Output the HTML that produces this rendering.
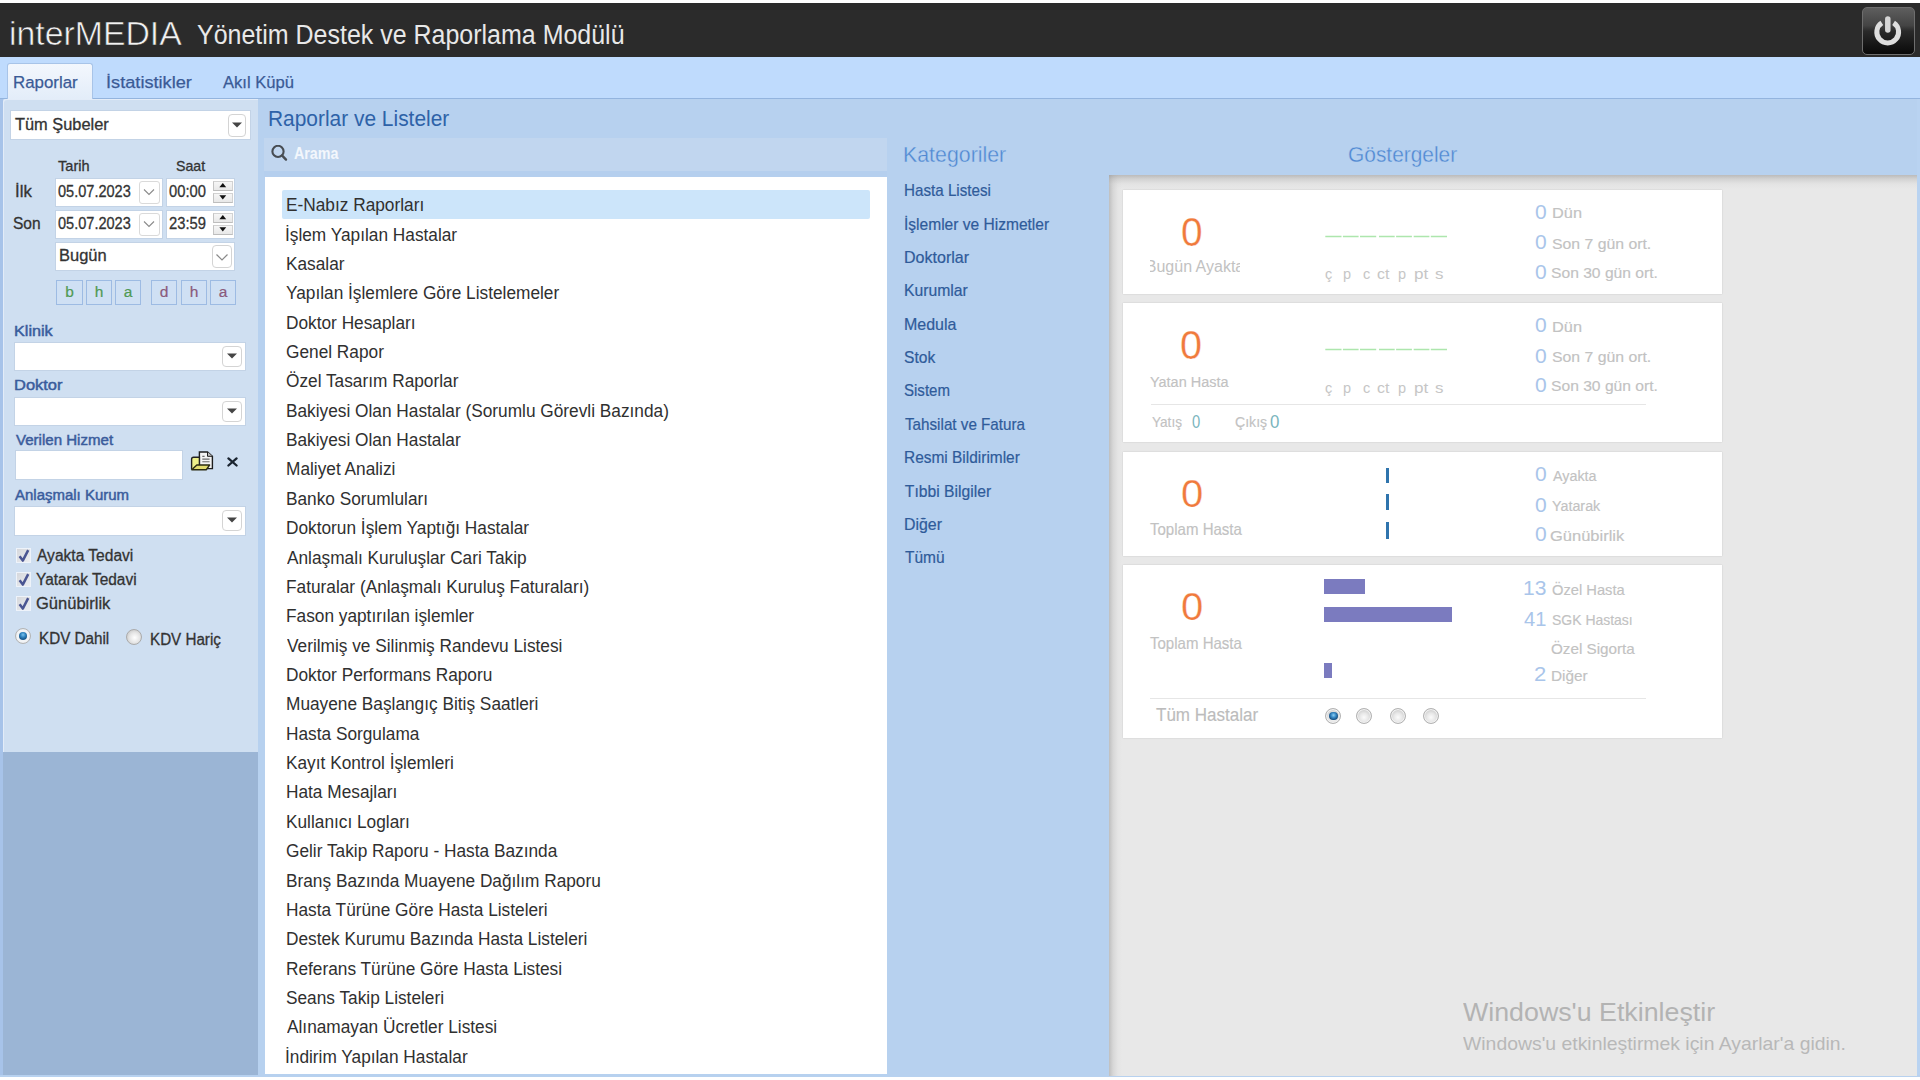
<!DOCTYPE html>
<html><head><meta charset="utf-8"><style>
html,body{margin:0;padding:0;width:1920px;height:1080px;overflow:hidden;background:#fff;position:relative}
body{font-family:"Liberation Sans",sans-serif}
.b{position:absolute}
.t{position:absolute;white-space:pre;font-family:"Liberation Sans",sans-serif}
</style></head><body>
<div class="b" style="left:0px;top:3px;width:1920px;height:54px;background:#2b2b2b"></div>
<div class="b" style="left:1862px;top:7px;width:53px;height:48px;border-radius:5px;border:1px solid #6e6e6e;box-sizing:border-box;background:linear-gradient(#5e5e5e 0%,#444 38%,#2a2a2a 50%,#161616 80%,#0a0a0a 100%)"></div>
<svg class="b" style="left:1862px;top:7px" width="53" height="48" viewBox="0 0 53 48"><path d="M31.6 15.9 A10.9 10.9 0 1 1 19.8 15.9" fill="none" stroke="#dedede" stroke-width="5" stroke-linecap="butt"/><path d="M25.8 12 V23" stroke="#d6d6d6" stroke-width="5.5" stroke-linecap="round"/></svg>
<div class="b" style="left:0px;top:57px;width:1920px;height:41px;background:#bfdbfd"></div>
<div class="b" style="left:0px;top:98px;width:1920px;height:1px;background:#93b4de"></div>
<div class="b" style="left:7px;top:63px;width:86px;height:36px;background:linear-gradient(#f3f7fd,#e3edf9);border:1px solid #a8c4e8;border-bottom:none;border-radius:3px 3px 0 0;box-sizing:border-box"></div>
<div class="b" style="left:0px;top:99px;width:1920px;height:978px;background:#b7d1ef"></div>
<div class="b" style="left:0px;top:1077px;width:1920px;height:3px;background:#ffffff"></div>
<div class="b" style="left:0px;top:99px;width:3px;height:976px;background:#a7c3e9"></div>
<div class="b" style="left:3px;top:99px;width:255px;height:653px;background:#cfdff1;border-top-left-radius:3px;box-shadow:inset 1px 1px 0 #e3ecf8"></div>
<div class="b" style="left:3px;top:752px;width:255px;height:323px;background:#9bb5d5"></div>
<div class="b" style="left:10px;top:110px;width:241px;height:30px;background:#fff;border:1px solid #c3d3e6;box-sizing:border-box"></div>
<div class="b" style="left:228px;top:114px;width:18px;height:23px;background:#fff;border:1px solid #d4d4d4;border-radius:4px;box-sizing:border-box"></div>
<svg class="b" style="left:231.0px;top:120.7px" width="12" height="8"><path d="M1 1.5 L11 1.5 L6 6.5 Z" fill="#454545"/></svg>
<div class="b" style="left:55px;top:178px;width:108px;height:29px;background:#fff;border:1px solid #c3d3e6;box-sizing:border-box"></div>
<div class="b" style="left:139px;top:181px;width:21px;height:23px;background:#fff;border:1px solid #dadada;border-radius:3px;box-sizing:border-box"></div>
<svg class="b" style="left:142px;top:187px" width="14" height="10"><path d="M2 2.5 L7 7.5 L12 2.5" fill="none" stroke="#8a8a8a" stroke-width="1.1"/></svg>
<div class="b" style="left:166px;top:178px;width:69px;height:29px;background:#fff;border:1px solid #c3d3e6;box-sizing:border-box"></div>
<div class="b" style="left:213px;top:181px;width:20px;height:10px;background:linear-gradient(#f6f6f6,#e8e8e8);border:1px solid #d2d2d2;border-left-color:#c4c4c4;border-bottom-color:#bdbdbd;box-sizing:border-box"></div>
<div class="b" style="left:213px;top:193px;width:20px;height:10px;background:linear-gradient(#f6f6f6,#e8e8e8);border:1px solid #d2d2d2;border-left-color:#c4c4c4;border-bottom-color:#bdbdbd;box-sizing:border-box"></div>
<svg class="b" style="left:217px;top:183px" width="12" height="20"><path d="M2.4 4.3 L9.2 4.3 L5.8 0.1 Z" fill="#111"/><path d="M2.4 12.2 L9.2 12.2 L5.8 16.4 Z" fill="#111"/></svg>
<div class="b" style="left:55px;top:210px;width:108px;height:29px;background:#fff;border:1px solid #c3d3e6;box-sizing:border-box"></div>
<div class="b" style="left:139px;top:213px;width:21px;height:23px;background:#fff;border:1px solid #dadada;border-radius:3px;box-sizing:border-box"></div>
<svg class="b" style="left:142px;top:219px" width="14" height="10"><path d="M2 2.5 L7 7.5 L12 2.5" fill="none" stroke="#8a8a8a" stroke-width="1.1"/></svg>
<div class="b" style="left:166px;top:210px;width:69px;height:29px;background:#fff;border:1px solid #c3d3e6;box-sizing:border-box"></div>
<div class="b" style="left:213px;top:213px;width:20px;height:10px;background:linear-gradient(#f6f6f6,#e8e8e8);border:1px solid #d2d2d2;border-left-color:#c4c4c4;border-bottom-color:#bdbdbd;box-sizing:border-box"></div>
<div class="b" style="left:213px;top:225px;width:20px;height:10px;background:linear-gradient(#f6f6f6,#e8e8e8);border:1px solid #d2d2d2;border-left-color:#c4c4c4;border-bottom-color:#bdbdbd;box-sizing:border-box"></div>
<svg class="b" style="left:217px;top:215px" width="12" height="20"><path d="M2.4 4.3 L9.2 4.3 L5.8 0.1 Z" fill="#111"/><path d="M2.4 12.2 L9.2 12.2 L5.8 16.4 Z" fill="#111"/></svg>
<div class="b" style="left:55px;top:242px;width:180px;height:29px;background:#fff;border:1px solid #c3d3e6;box-sizing:border-box"></div>
<div class="b" style="left:212px;top:245px;width:20px;height:23px;background:#fff;border:1px solid #d4d4d4;border-radius:4px;box-sizing:border-box"></div>
<svg class="b" style="left:215.0px;top:251.5px" width="14" height="10"><path d="M1.5 2.5 L7 8 L12.5 2.5" fill="none" stroke="#8a8a8a" stroke-width="1.2"/></svg>
<div class="b" style="left:56px;top:280px;width:27px;height:25px;background:#cfe0f4;border:1px solid #9dbbe3;box-sizing:border-box"></div>
<div class="t" style="left:56px;top:283.88px;width:27px;text-align:center;font-size:15.5px;line-height:15.5px;color:#4f9a55;-webkit-text-stroke:0.2px #4f9a55">b</div>
<div class="b" style="left:86px;top:280px;width:26px;height:25px;background:#cfe0f4;border:1px solid #9dbbe3;box-sizing:border-box"></div>
<div class="t" style="left:86px;top:283.88px;width:26px;text-align:center;font-size:15.5px;line-height:15.5px;color:#4f9a55;-webkit-text-stroke:0.2px #4f9a55">h</div>
<div class="b" style="left:115px;top:280px;width:26px;height:25px;background:#cfe0f4;border:1px solid #9dbbe3;box-sizing:border-box"></div>
<div class="t" style="left:115px;top:283.88px;width:26px;text-align:center;font-size:15.5px;line-height:15.5px;color:#4f9a55;-webkit-text-stroke:0.2px #4f9a55">a</div>
<div class="b" style="left:151px;top:280px;width:26px;height:25px;background:#cfe0f4;border:1px solid #9dbbe3;box-sizing:border-box"></div>
<div class="t" style="left:151px;top:283.88px;width:26px;text-align:center;font-size:15.5px;line-height:15.5px;color:#8a5a7c;-webkit-text-stroke:0.2px #8a5a7c">d</div>
<div class="b" style="left:181px;top:280px;width:26px;height:25px;background:#cfe0f4;border:1px solid #9dbbe3;box-sizing:border-box"></div>
<div class="t" style="left:181px;top:283.88px;width:26px;text-align:center;font-size:15.5px;line-height:15.5px;color:#8a5a7c;-webkit-text-stroke:0.2px #8a5a7c">h</div>
<div class="b" style="left:210px;top:280px;width:26px;height:25px;background:#cfe0f4;border:1px solid #9dbbe3;box-sizing:border-box"></div>
<div class="t" style="left:210px;top:283.88px;width:26px;text-align:center;font-size:15.5px;line-height:15.5px;color:#8a5a7c;-webkit-text-stroke:0.2px #8a5a7c">a</div>
<div class="b" style="left:14px;top:342px;width:232px;height:29px;background:#fff;border:1px solid #c3d3e6;box-sizing:border-box"></div>
<div class="b" style="left:222px;top:346px;width:20px;height:21px;background:#fff;border:1px solid #d4d4d4;border-radius:4px;box-sizing:border-box"></div>
<svg class="b" style="left:226.0px;top:351.7px" width="12" height="8"><path d="M1 1.5 L11 1.5 L6 6.5 Z" fill="#454545"/></svg>
<div class="b" style="left:14px;top:397px;width:232px;height:29px;background:#fff;border:1px solid #c3d3e6;box-sizing:border-box"></div>
<div class="b" style="left:222px;top:401px;width:20px;height:21px;background:#fff;border:1px solid #d4d4d4;border-radius:4px;box-sizing:border-box"></div>
<svg class="b" style="left:226.0px;top:406.7px" width="12" height="8"><path d="M1 1.5 L11 1.5 L6 6.5 Z" fill="#454545"/></svg>
<div class="b" style="left:15px;top:450px;width:168px;height:30px;background:#fff;border:1px solid #c3d3e6;box-sizing:border-box"></div>
<svg class="b" style="left:190px;top:450px" width="26" height="22" viewBox="0 0 26 22"><path d="M9.4 2 H17.5 L22.4 6.3 V18.6 H9.4 Z" fill="#f4f4f4" stroke="#1e1e1e" stroke-width="1.4"/><path d="M17.5 2 V6.3 H22.4" fill="#bdbdbd" stroke="#1e1e1e" stroke-width="1"/><path d="M12.3 6.4 H14.6 M12.3 9.1 H19.6 M12.3 11.7 H19.6" stroke="#6a6a6a" stroke-width="1.1"/><path d="M1.6 19.6 V9.3 Q1.6 7.3 3.6 7.3 H9.4 V15.2" fill="#eef08a" stroke="#222" stroke-width="1.4"/><path d="M1.8 19.8 L6.8 15 H19.6 L16.2 19.8 Z" fill="#e2dc6e" stroke="#2a2a10" stroke-width="1.4" stroke-linejoin="round"/></svg>
<svg class="b" style="left:226px;top:456px" width="13" height="12"><path d="M2.4 2.4 L10.6 9.5 M10.6 2.4 L2.4 9.5" stroke="#1a2430" stroke-width="2.3" stroke-linecap="round"/></svg>
<div class="b" style="left:14px;top:506px;width:232px;height:30px;background:#fff;border:1px solid #c3d3e6;box-sizing:border-box"></div>
<div class="b" style="left:222px;top:510px;width:20px;height:21px;background:#fff;border:1px solid #d4d4d4;border-radius:4px;box-sizing:border-box"></div>
<svg class="b" style="left:226.0px;top:515.7px" width="12" height="8"><path d="M1 1.5 L11 1.5 L6 6.5 Z" fill="#454545"/></svg>
<div class="b" style="left:16px;top:548px;width:15px;height:15px;background:linear-gradient(135deg,#d6d8dc,#eceef2);border:1px solid #eef3fa;box-sizing:border-box"></div>
<svg class="b" style="left:16px;top:548px" width="15" height="15"><path d="M3.6 8.2 L6.8 12.6 L12.2 2.2" fill="none" stroke="#4a5592" stroke-width="2.5" stroke-linejoin="round"/></svg>
<div class="b" style="left:16px;top:572px;width:15px;height:15px;background:linear-gradient(135deg,#d6d8dc,#eceef2);border:1px solid #eef3fa;box-sizing:border-box"></div>
<svg class="b" style="left:16px;top:572px" width="15" height="15"><path d="M3.6 8.2 L6.8 12.6 L12.2 2.2" fill="none" stroke="#4a5592" stroke-width="2.5" stroke-linejoin="round"/></svg>
<div class="b" style="left:16px;top:596px;width:15px;height:15px;background:linear-gradient(135deg,#d6d8dc,#eceef2);border:1px solid #eef3fa;box-sizing:border-box"></div>
<svg class="b" style="left:16px;top:596px" width="15" height="15"><path d="M3.6 8.2 L6.8 12.6 L12.2 2.2" fill="none" stroke="#4a5592" stroke-width="2.5" stroke-linejoin="round"/></svg>
<div class="b" style="left:15px;top:628px;width:16px;height:16px;border-radius:50%;background:radial-gradient(circle at 50% 50%,#f2f4f6 0,#f2f4f6 6px,#d8dce0 8px);border:1px solid #b4b4b4;box-sizing:border-box"></div>
<div class="b" style="left:18.7px;top:631.7px;width:8.6px;height:8.6px;border-radius:50%;background:radial-gradient(circle at 50% 35%,#7cc4ee 0,#2f84c0 2.5px,#1b5c90 4.3px)"></div>
<div class="b" style="left:126px;top:629px;width:16px;height:16px;border-radius:50%;background:radial-gradient(circle at 55% 55%,#ffffff 0,#e6e6e6 5px,#cfcfcf 8px);border:1px solid #ababab;box-sizing:border-box"></div>
<div class="b" style="left:264px;top:138px;width:623px;height:33px;background:#c1d6ef"></div>
<div class="b" style="left:264px;top:171px;width:623px;height:6px;background:#b5cfee"></div>
<svg class="b" style="left:271px;top:145px" width="18" height="18" viewBox="0 0 18 18"><circle cx="7" cy="6.4" r="5.6" fill="none" stroke="#474c52" stroke-width="2.1"/><path d="M11.2 10.6 L15 14.6" stroke="#474c52" stroke-width="2.4" stroke-linecap="round"/></svg>
<div class="b" style="left:265px;top:177px;width:622px;height:897px;background:#ffffff"></div>
<div class="b" style="left:282px;top:190px;width:588px;height:29px;background:#cce5fa;border-radius:2px"></div>
<div class="b" style="left:1109px;top:175px;width:808px;height:901px;background:linear-gradient(to bottom,rgba(150,150,150,0.55) 0px,rgba(170,170,170,0.35) 4px,rgba(200,200,200,0.15) 9px,rgba(232,232,232,0) 14px),linear-gradient(to right,rgba(150,150,150,0.5) 0px,rgba(175,175,175,0.3) 4px,rgba(205,205,205,0.12) 9px,rgba(232,232,232,0) 13px),#e8e8e8"></div>
<div class="b" style="left:1917px;top:99px;width:3px;height:976px;background:#b9d3f1"></div>
<div class="b" style="left:1123px;top:190px;width:599px;height:104px;background:#fff;box-shadow:0 0 1.5px rgba(0,0,0,0.16)"></div>
<div class="b" style="left:1150px;top:252.8px;width:90px;height:28px;overflow:hidden"><div style="position:absolute;left:-40px;right:-40px;top:6.5px;text-align:center;font-size:16px;line-height:16px;color:#c2c2c2;white-space:nowrap">Bugün Ayakta</div></div>
<svg class="b" style="left:1325px;top:234.5px" width="123" height="3"><path d="M0.3 1.5 H16.5 M17.9 1.5 H33.6 M35.0 1.5 H51.2 M54.0 1.5 H69.7 M71.1 1.5 H86.9 M88.7 1.5 H104.4 M105.8 1.5 H122.0" stroke="#ade6ad" stroke-width="1.6"/></svg>
<div class="b" style="left:1123px;top:303px;width:599px;height:139px;background:#fff;box-shadow:0 0 1.5px rgba(0,0,0,0.16)"></div>
<svg class="b" style="left:1325px;top:347.9px" width="123" height="3"><path d="M0.3 1.5 H16.5 M17.9 1.5 H33.6 M35.0 1.5 H51.2 M54.0 1.5 H69.7 M71.1 1.5 H86.9 M88.7 1.5 H104.4 M105.8 1.5 H122.0" stroke="#ade6ad" stroke-width="1.6"/></svg>
<div class="b" style="left:1151px;top:404px;width:495px;height:1px;background:#e6e6e6"></div>
<div class="b" style="left:1123px;top:452px;width:599px;height:104px;background:#fff;box-shadow:0 0 1.5px rgba(0,0,0,0.16)"></div>
<div class="b" style="left:1386px;top:468px;width:3px;height:15px;background:#2f74ad"></div>
<div class="b" style="left:1386px;top:494px;width:3px;height:16px;background:#2f74ad"></div>
<div class="b" style="left:1386px;top:522px;width:3px;height:17px;background:#2f74ad"></div>
<div class="b" style="left:1123px;top:565px;width:599px;height:173px;background:#fff;box-shadow:0 0 1.5px rgba(0,0,0,0.16)"></div>
<div class="b" style="left:1324px;top:579px;width:41px;height:15px;background:#7b7bbf"></div>
<div class="b" style="left:1324px;top:607px;width:128px;height:15px;background:#7b7bbf"></div>
<div class="b" style="left:1324px;top:663px;width:8px;height:15px;background:#7b7bbf"></div>
<div class="b" style="left:1150px;top:698px;width:496px;height:1px;background:#e6e6e6"></div>
<div class="b" style="left:1325.2px;top:708px;width:16px;height:16px;border-radius:50%;background:radial-gradient(circle at 50% 60%,#fbfbfb 0,#e9e9e9 4px,#d4d4d4 7px);border:1.5px solid #b2b2b2;box-shadow:inset 0 0 0 1px #f2f2f2;box-sizing:border-box"></div>
<div class="b" style="left:1328.8px;top:711.6px;width:8.8px;height:8.8px;border-radius:50%;background:radial-gradient(circle at 50% 40%,#8fd0f4 0,#3a8cc8 2.3px,#1a5588 4.4px)"></div>
<div class="b" style="left:1356.0px;top:708px;width:16px;height:16px;border-radius:50%;background:radial-gradient(circle at 50% 60%,#fbfbfb 0,#e9e9e9 4px,#d4d4d4 7px);border:1.5px solid #b2b2b2;box-shadow:inset 0 0 0 1px #f2f2f2;box-sizing:border-box"></div>
<div class="b" style="left:1389.7px;top:708px;width:16px;height:16px;border-radius:50%;background:radial-gradient(circle at 50% 60%,#fbfbfb 0,#e9e9e9 4px,#d4d4d4 7px);border:1.5px solid #b2b2b2;box-shadow:inset 0 0 0 1px #f2f2f2;box-sizing:border-box"></div>
<div class="b" style="left:1422.9px;top:708px;width:16px;height:16px;border-radius:50%;background:radial-gradient(circle at 50% 60%,#fbfbfb 0,#e9e9e9 4px,#d4d4d4 7px);border:1.5px solid #b2b2b2;box-shadow:inset 0 0 0 1px #f2f2f2;box-sizing:border-box"></div>
<div class="t" style="left:8.95px;top:16.70px;font-size:33px;line-height:33px;color:#f2f2f2;transform:scaleX(1.0240);transform-origin:0 0;-webkit-text-stroke:0.6px #2b2b2b;">interMEDIA</div>
<div class="t" style="left:196.57px;top:22.20px;font-size:27px;line-height:27px;color:#e8e8e8;transform:scaleX(0.9250);transform-origin:0 0;">Yönetim Destek ve Raporlama Modülü</div>
<div class="t" style="left:13.03px;top:74.30px;font-size:17.4px;line-height:17.4px;color:#3a5a96;transform:scaleX(0.9697);transform-origin:0 0;-webkit-text-stroke:0.25px #3a5a96;">Raporlar</div>
<div class="t" style="left:105.91px;top:74.30px;font-size:17.4px;line-height:17.4px;color:#3a5a96;transform:scaleX(1.0462);transform-origin:0 0;-webkit-text-stroke:0.25px #3a5a96;">İstatistikler</div>
<div class="t" style="left:222.50px;top:74.30px;font-size:17.4px;line-height:17.4px;color:#3a5a96;transform:scaleX(0.9527);transform-origin:0 0;-webkit-text-stroke:0.25px #3a5a96;">Akıl Küpü</div>
<div class="t" style="left:14.60px;top:117.20px;font-size:15.6px;line-height:15.6px;color:#333;transform:scaleX(1.0494);transform-origin:0 0;-webkit-text-stroke:0.3px #333;">Tüm Şubeler</div>
<div class="t" style="left:58.40px;top:158.00px;font-size:15px;line-height:15px;color:#333;transform:scaleX(0.9719);transform-origin:0 0;-webkit-text-stroke:0.3px #333;">Tarih</div>
<div class="t" style="left:176.06px;top:158.00px;font-size:15px;line-height:15px;color:#333;transform:scaleX(0.9433);transform-origin:0 0;-webkit-text-stroke:0.3px #333;">Saat</div>
<div class="t" style="left:14.52px;top:184.30px;font-size:15.6px;line-height:15.6px;color:#333;transform:scaleX(1.0786);transform-origin:0 0;-webkit-text-stroke:0.3px #333;">İlk</div>
<div class="t" style="left:13.00px;top:216.40px;font-size:15.6px;line-height:15.6px;color:#333;transform:scaleX(0.9962);transform-origin:0 0;-webkit-text-stroke:0.3px #333;">Son</div>
<div class="t" style="left:58.42px;top:182.70px;font-size:16.5px;line-height:16.5px;color:#333;transform:scaleX(0.8815);transform-origin:0 0;-webkit-text-stroke:0.3px #333;">05.07.2023</div>
<div class="t" style="left:169.10px;top:182.70px;font-size:16.5px;line-height:16.5px;color:#333;transform:scaleX(0.8950);transform-origin:0 0;-webkit-text-stroke:0.3px #333;">00:00</div>
<div class="t" style="left:58.42px;top:214.80px;font-size:16.5px;line-height:16.5px;color:#333;transform:scaleX(0.8815);transform-origin:0 0;-webkit-text-stroke:0.3px #333;">05.07.2023</div>
<div class="t" style="left:169.10px;top:214.80px;font-size:16.5px;line-height:16.5px;color:#333;transform:scaleX(0.8950);transform-origin:0 0;-webkit-text-stroke:0.3px #333;">23:59</div>
<div class="t" style="left:58.67px;top:247.50px;font-size:16px;line-height:16px;color:#333;transform:scaleX(1.0295);transform-origin:0 0;-webkit-text-stroke:0.3px #333;">Bugün</div>
<div class="t" style="left:13.84px;top:323.50px;font-size:14px;line-height:14px;color:#3a5c9c;transform:scaleX(1.1562);transform-origin:0 0;-webkit-text-stroke:0.45px #3a5c9c;">Klinik</div>
<div class="t" style="left:14.42px;top:378.00px;font-size:14px;line-height:14px;color:#3a5c9c;transform:scaleX(1.1750);transform-origin:0 0;-webkit-text-stroke:0.45px #3a5c9c;">Doktor</div>
<div class="t" style="left:15.60px;top:433.00px;font-size:14px;line-height:14px;color:#3a5c9c;transform:scaleX(1.0756);transform-origin:0 0;-webkit-text-stroke:0.45px #3a5c9c;">Verilen Hizmet</div>
<div class="t" style="left:15.00px;top:487.60px;font-size:14px;line-height:14px;color:#3a5c9c;transform:scaleX(1.0698);transform-origin:0 0;-webkit-text-stroke:0.45px #3a5c9c;">Anlaşmalı Kurum</div>
<div class="t" style="left:36.70px;top:548.00px;font-size:16px;line-height:16px;color:#333;transform:scaleX(0.9724);transform-origin:0 0;-webkit-text-stroke:0.3px #333;">Ayakta Tedavi</div>
<div class="t" style="left:35.74px;top:572.00px;font-size:16px;line-height:16px;color:#333;transform:scaleX(0.9637);transform-origin:0 0;-webkit-text-stroke:0.3px #333;">Yatarak Tedavi</div>
<div class="t" style="left:35.67px;top:596.00px;font-size:16px;line-height:16px;color:#333;transform:scaleX(1.0324);transform-origin:0 0;-webkit-text-stroke:0.3px #333;">Günübirlik</div>
<div class="t" style="left:38.55px;top:631.00px;font-size:16px;line-height:16px;color:#333;transform:scaleX(0.9514);transform-origin:0 0;-webkit-text-stroke:0.3px #333;">KDV Dahil</div>
<div class="t" style="left:149.75px;top:632.00px;font-size:16px;line-height:16px;color:#333;transform:scaleX(0.9493);transform-origin:0 0;-webkit-text-stroke:0.3px #333;">KDV Hariç</div>
<div class="t" style="left:267.56px;top:108.70px;font-size:21.5px;line-height:21.5px;color:#2e62a8;transform:scaleX(0.9723);transform-origin:0 0;">Raporlar ve Listeler</div>
<div class="t" style="left:294.20px;top:145.80px;font-size:16px;line-height:16px;color:#f3f7fc;font-weight:700;transform:scaleX(0.8920);transform-origin:0 0;">Arama</div>
<div class="t" style="left:286.09px;top:196.25px;font-size:18.9px;line-height:18.9px;color:#303030;transform:scaleX(0.9140);transform-origin:0 0;">E-Nabız Raporları</div>
<div class="t" style="left:285.17px;top:225.61px;font-size:18.9px;line-height:18.9px;color:#303030;transform:scaleX(0.9140);transform-origin:0 0;">İşlem Yapılan Hastalar</div>
<div class="t" style="left:286.09px;top:254.97px;font-size:18.9px;line-height:18.9px;color:#303030;transform:scaleX(0.9140);transform-origin:0 0;">Kasalar</div>
<div class="t" style="left:286.09px;top:284.33px;font-size:18.9px;line-height:18.9px;color:#303030;transform:scaleX(0.9140);transform-origin:0 0;">Yapılan İşlemlere Göre Listelemeler</div>
<div class="t" style="left:286.09px;top:313.69px;font-size:18.9px;line-height:18.9px;color:#303030;transform:scaleX(0.9140);transform-origin:0 0;">Doktor Hesapları</div>
<div class="t" style="left:286.09px;top:343.05px;font-size:18.9px;line-height:18.9px;color:#303030;transform:scaleX(0.9140);transform-origin:0 0;">Genel Rapor</div>
<div class="t" style="left:286.09px;top:372.41px;font-size:18.9px;line-height:18.9px;color:#303030;transform:scaleX(0.9140);transform-origin:0 0;">Özel Tasarım Raporlar</div>
<div class="t" style="left:286.09px;top:401.77px;font-size:18.9px;line-height:18.9px;color:#303030;transform:scaleX(0.9140);transform-origin:0 0;">Bakiyesi Olan Hastalar (Sorumlu Görevli Bazında)</div>
<div class="t" style="left:286.09px;top:431.13px;font-size:18.9px;line-height:18.9px;color:#303030;transform:scaleX(0.9140);transform-origin:0 0;">Bakiyesi Olan Hastalar</div>
<div class="t" style="left:286.09px;top:460.49px;font-size:18.9px;line-height:18.9px;color:#303030;transform:scaleX(0.9140);transform-origin:0 0;">Maliyet Analizi</div>
<div class="t" style="left:286.09px;top:489.85px;font-size:18.9px;line-height:18.9px;color:#303030;transform:scaleX(0.9140);transform-origin:0 0;">Banko Sorumluları</div>
<div class="t" style="left:286.09px;top:519.21px;font-size:18.9px;line-height:18.9px;color:#303030;transform:scaleX(0.9140);transform-origin:0 0;">Doktorun İşlem Yaptığı Hastalar</div>
<div class="t" style="left:287.00px;top:548.57px;font-size:18.9px;line-height:18.9px;color:#303030;transform:scaleX(0.9140);transform-origin:0 0;">Anlaşmalı Kuruluşlar Cari Takip</div>
<div class="t" style="left:286.09px;top:577.93px;font-size:18.9px;line-height:18.9px;color:#303030;transform:scaleX(0.9140);transform-origin:0 0;">Faturalar (Anlaşmalı Kuruluş Faturaları)</div>
<div class="t" style="left:286.09px;top:607.29px;font-size:18.9px;line-height:18.9px;color:#303030;transform:scaleX(0.9140);transform-origin:0 0;">Fason yaptırılan işlemler</div>
<div class="t" style="left:287.00px;top:636.65px;font-size:18.9px;line-height:18.9px;color:#303030;transform:scaleX(0.9140);transform-origin:0 0;">Verilmiş ve Silinmiş Randevu Listesi</div>
<div class="t" style="left:286.09px;top:666.01px;font-size:18.9px;line-height:18.9px;color:#303030;transform:scaleX(0.9140);transform-origin:0 0;">Doktor Performans Raporu</div>
<div class="t" style="left:286.09px;top:695.37px;font-size:18.9px;line-height:18.9px;color:#303030;transform:scaleX(0.9140);transform-origin:0 0;">Muayene Başlangıç Bitiş Saatleri</div>
<div class="t" style="left:286.09px;top:724.73px;font-size:18.9px;line-height:18.9px;color:#303030;transform:scaleX(0.9140);transform-origin:0 0;">Hasta Sorgulama</div>
<div class="t" style="left:286.09px;top:754.09px;font-size:18.9px;line-height:18.9px;color:#303030;transform:scaleX(0.9140);transform-origin:0 0;">Kayıt Kontrol İşlemleri</div>
<div class="t" style="left:286.09px;top:783.45px;font-size:18.9px;line-height:18.9px;color:#303030;transform:scaleX(0.9140);transform-origin:0 0;">Hata Mesajları</div>
<div class="t" style="left:286.09px;top:812.81px;font-size:18.9px;line-height:18.9px;color:#303030;transform:scaleX(0.9140);transform-origin:0 0;">Kullanıcı Logları</div>
<div class="t" style="left:286.09px;top:842.17px;font-size:18.9px;line-height:18.9px;color:#303030;transform:scaleX(0.9140);transform-origin:0 0;">Gelir Takip Raporu - Hasta Bazında</div>
<div class="t" style="left:286.09px;top:871.53px;font-size:18.9px;line-height:18.9px;color:#303030;transform:scaleX(0.9140);transform-origin:0 0;">Branş Bazında Muayene Dağılım Raporu</div>
<div class="t" style="left:286.09px;top:900.89px;font-size:18.9px;line-height:18.9px;color:#303030;transform:scaleX(0.9140);transform-origin:0 0;">Hasta Türüne Göre Hasta Listeleri</div>
<div class="t" style="left:286.09px;top:930.25px;font-size:18.9px;line-height:18.9px;color:#303030;transform:scaleX(0.9140);transform-origin:0 0;">Destek Kurumu Bazında Hasta Listeleri</div>
<div class="t" style="left:286.09px;top:959.61px;font-size:18.9px;line-height:18.9px;color:#303030;transform:scaleX(0.9140);transform-origin:0 0;">Referans Türüne Göre Hasta Listesi</div>
<div class="t" style="left:286.09px;top:988.97px;font-size:18.9px;line-height:18.9px;color:#303030;transform:scaleX(0.9140);transform-origin:0 0;">Seans Takip Listeleri</div>
<div class="t" style="left:287.00px;top:1018.33px;font-size:18.9px;line-height:18.9px;color:#303030;transform:scaleX(0.9140);transform-origin:0 0;">Alınamayan Ücretler Listesi</div>
<div class="t" style="left:285.17px;top:1047.69px;font-size:18.9px;line-height:18.9px;color:#303030;transform:scaleX(0.9140);transform-origin:0 0;">İndirim Yapılan Hastalar</div>
<div class="t" style="left:902.76px;top:143.90px;font-size:22px;line-height:22px;color:#5189d2;transform:scaleX(0.9702);transform-origin:0 0;-webkit-text-stroke:0.35px #b7d1ef;">Kategoriler</div>
<div class="t" style="left:903.83px;top:183.30px;font-size:15.7px;line-height:15.7px;color:#2f5b9a;transform:scaleX(0.9682);transform-origin:0 0;-webkit-text-stroke:0.2px #2f5b9a;">Hasta Listesi</div>
<div class="t" style="left:903.81px;top:216.60px;font-size:15.7px;line-height:15.7px;color:#2f5b9a;transform:scaleX(0.9910);transform-origin:0 0;-webkit-text-stroke:0.2px #2f5b9a;">İşlemler ve Hizmetler</div>
<div class="t" style="left:903.78px;top:250.00px;font-size:15.7px;line-height:15.7px;color:#2f5b9a;transform:scaleX(1.0238);transform-origin:0 0;-webkit-text-stroke:0.2px #2f5b9a;">Doktorlar</div>
<div class="t" style="left:903.80px;top:283.40px;font-size:15.7px;line-height:15.7px;color:#2f5b9a;transform:scaleX(1.0032);transform-origin:0 0;-webkit-text-stroke:0.2px #2f5b9a;">Kurumlar</div>
<div class="t" style="left:903.78px;top:316.70px;font-size:15.7px;line-height:15.7px;color:#2f5b9a;transform:scaleX(1.0196);transform-origin:0 0;-webkit-text-stroke:0.2px #2f5b9a;">Medula</div>
<div class="t" style="left:903.81px;top:350.00px;font-size:15.7px;line-height:15.7px;color:#2f5b9a;transform:scaleX(0.9933);transform-origin:0 0;-webkit-text-stroke:0.2px #2f5b9a;">Stok</div>
<div class="t" style="left:903.84px;top:383.40px;font-size:15.7px;line-height:15.7px;color:#2f5b9a;transform:scaleX(0.9587);transform-origin:0 0;-webkit-text-stroke:0.2px #2f5b9a;">Sistem</div>
<div class="t" style="left:904.80px;top:417.00px;font-size:15.7px;line-height:15.7px;color:#2f5b9a;transform:scaleX(0.9694);transform-origin:0 0;-webkit-text-stroke:0.2px #2f5b9a;">Tahsilat ve Fatura</div>
<div class="t" style="left:903.82px;top:450.30px;font-size:15.7px;line-height:15.7px;color:#2f5b9a;transform:scaleX(0.9846);transform-origin:0 0;-webkit-text-stroke:0.2px #2f5b9a;">Resmi Bildirimler</div>
<div class="t" style="left:904.80px;top:483.70px;font-size:15.7px;line-height:15.7px;color:#2f5b9a;-webkit-text-stroke:0.2px #2f5b9a;">Tıbbi Bilgiler</div>
<div class="t" style="left:903.79px;top:517.00px;font-size:15.7px;line-height:15.7px;color:#2f5b9a;transform:scaleX(1.0139);transform-origin:0 0;-webkit-text-stroke:0.2px #2f5b9a;">Diğer</div>
<div class="t" style="left:904.80px;top:550.30px;font-size:15.7px;line-height:15.7px;color:#2f5b9a;transform:scaleX(0.9872);transform-origin:0 0;-webkit-text-stroke:0.2px #2f5b9a;">Tümü</div>
<div class="t" style="left:1348.05px;top:143.60px;font-size:22px;line-height:22px;color:#5189d2;transform:scaleX(0.9500);transform-origin:0 0;-webkit-text-stroke:0.35px #b7d1ef;">Göstergeler</div>
<div class="t" style="left:1180.58px;top:211.80px;font-size:40.5px;line-height:40.5px;color:#f07a3c;transform:scaleX(0.9579);transform-origin:0 0;-webkit-text-stroke:0.25px #fff;">0</div>
<div class="t" style="left:1325.00px;top:267.00px;font-size:14.5px;line-height:14.5px;color:#c6c6c6;">ç</div>
<div class="t" style="left:1343.00px;top:267.00px;font-size:14.5px;line-height:14.5px;color:#c6c6c6;">p</div>
<div class="t" style="left:1363.00px;top:267.00px;font-size:14.5px;line-height:14.5px;color:#c6c6c6;">c</div>
<div class="t" style="left:1376.90px;top:267.00px;font-size:14.5px;line-height:14.5px;color:#c6c6c6;transform:scaleX(1.1000);transform-origin:0 0;">ct</div>
<div class="t" style="left:1398.00px;top:267.00px;font-size:14.5px;line-height:14.5px;color:#c6c6c6;">p</div>
<div class="t" style="left:1413.82px;top:267.00px;font-size:14.5px;line-height:14.5px;color:#c6c6c6;transform:scaleX(1.1818);transform-origin:0 0;">pt</div>
<div class="t" style="left:1434.83px;top:267.00px;font-size:14.5px;line-height:14.5px;color:#c6c6c6;transform:scaleX(1.1667);transform-origin:0 0;">s</div>
<div class="t" style="left:1535.00px;top:200.80px;font-size:21px;line-height:21px;color:#a9c5ea;">0</div>
<div class="t" style="left:1551.83px;top:206.30px;font-size:14px;line-height:14px;color:#c2c2c2;transform:scaleX(1.1667);transform-origin:0 0;-webkit-text-stroke:0.15px #c2c2c2;">Dün</div>
<div class="t" style="left:1535.00px;top:231.40px;font-size:21px;line-height:21px;color:#a9c5ea;">0</div>
<div class="t" style="left:1551.87px;top:236.90px;font-size:14px;line-height:14px;color:#c2c2c2;transform:scaleX(1.1279);transform-origin:0 0;-webkit-text-stroke:0.15px #c2c2c2;">Son 7 gün ort.</div>
<div class="t" style="left:1535.00px;top:260.50px;font-size:21px;line-height:21px;color:#a9c5ea;">0</div>
<div class="t" style="left:1550.88px;top:266.00px;font-size:14px;line-height:14px;color:#c2c2c2;transform:scaleX(1.1170);transform-origin:0 0;-webkit-text-stroke:0.15px #c2c2c2;">Son 30 gün ort.</div>
<div class="t" style="left:1180.44px;top:324.60px;font-size:40.5px;line-height:40.5px;color:#f07a3c;transform:scaleX(0.9789);transform-origin:0 0;-webkit-text-stroke:0.25px #fff;">0</div>
<div class="t" style="left:1150.07px;top:373.50px;font-size:15.5px;line-height:15.5px;color:#c2c2c2;transform:scaleX(0.9325);transform-origin:0 0;-webkit-text-stroke:0.15px #c2c2c2;">Yatan Hasta</div>
<div class="t" style="left:1325.00px;top:380.50px;font-size:14.5px;line-height:14.5px;color:#c6c6c6;">ç</div>
<div class="t" style="left:1343.00px;top:380.50px;font-size:14.5px;line-height:14.5px;color:#c6c6c6;">p</div>
<div class="t" style="left:1363.00px;top:380.50px;font-size:14.5px;line-height:14.5px;color:#c6c6c6;">c</div>
<div class="t" style="left:1376.90px;top:380.50px;font-size:14.5px;line-height:14.5px;color:#c6c6c6;transform:scaleX(1.1000);transform-origin:0 0;">ct</div>
<div class="t" style="left:1398.00px;top:380.50px;font-size:14.5px;line-height:14.5px;color:#c6c6c6;">p</div>
<div class="t" style="left:1413.82px;top:380.50px;font-size:14.5px;line-height:14.5px;color:#c6c6c6;transform:scaleX(1.1818);transform-origin:0 0;">pt</div>
<div class="t" style="left:1434.83px;top:380.50px;font-size:14.5px;line-height:14.5px;color:#c6c6c6;transform:scaleX(1.1667);transform-origin:0 0;">s</div>
<div class="t" style="left:1535.00px;top:314.00px;font-size:21px;line-height:21px;color:#a9c5ea;">0</div>
<div class="t" style="left:1551.83px;top:319.50px;font-size:14px;line-height:14px;color:#c2c2c2;transform:scaleX(1.1667);transform-origin:0 0;-webkit-text-stroke:0.15px #c2c2c2;">Dün</div>
<div class="t" style="left:1535.00px;top:344.50px;font-size:21px;line-height:21px;color:#a9c5ea;">0</div>
<div class="t" style="left:1551.87px;top:350.00px;font-size:14px;line-height:14px;color:#c2c2c2;transform:scaleX(1.1279);transform-origin:0 0;-webkit-text-stroke:0.15px #c2c2c2;">Son 7 gün ort.</div>
<div class="t" style="left:1535.00px;top:373.70px;font-size:21px;line-height:21px;color:#a9c5ea;">0</div>
<div class="t" style="left:1550.88px;top:379.20px;font-size:14px;line-height:14px;color:#c2c2c2;transform:scaleX(1.1170);transform-origin:0 0;-webkit-text-stroke:0.15px #c2c2c2;">Son 30 gün ort.</div>
<div class="t" style="left:1152.09px;top:414.00px;font-size:15px;line-height:15px;color:#c2c2c2;transform:scaleX(0.9062);transform-origin:0 0;-webkit-text-stroke:0.15px #c2c2c2;">Yatış</div>
<div class="t" style="left:1192.22px;top:411.50px;font-size:19px;line-height:19px;color:#7ab5bd;transform:scaleX(0.7778);transform-origin:0 0;">0</div>
<div class="t" style="left:1235.06px;top:414.00px;font-size:15px;line-height:15px;color:#c2c2c2;transform:scaleX(0.9394);transform-origin:0 0;-webkit-text-stroke:0.15px #c2c2c2;">Çıkış</div>
<div class="t" style="left:1270.11px;top:411.50px;font-size:19px;line-height:19px;color:#7ab5bd;transform:scaleX(0.8889);transform-origin:0 0;">0</div>
<div class="t" style="left:1180.95px;top:474.80px;font-size:38px;line-height:38px;color:#f07a3c;transform:scaleX(1.0526);transform-origin:0 0;-webkit-text-stroke:0.25px #fff;">0</div>
<div class="t" style="left:1150.00px;top:521.00px;font-size:16.5px;line-height:16.5px;color:#c2c2c2;transform:scaleX(0.9109);transform-origin:0 0;-webkit-text-stroke:0.15px #c2c2c2;">Toplam Hasta</div>
<div class="t" style="left:1535.00px;top:463.00px;font-size:21px;line-height:21px;color:#a9c5ea;">0</div>
<div class="t" style="left:1553.00px;top:468.50px;font-size:14px;line-height:14px;color:#c2c2c2;transform:scaleX(1.0233);transform-origin:0 0;-webkit-text-stroke:0.15px #c2c2c2;">Ayakta</div>
<div class="t" style="left:1535.00px;top:493.50px;font-size:21px;line-height:21px;color:#a9c5ea;">0</div>
<div class="t" style="left:1551.98px;top:499.00px;font-size:14px;line-height:14px;color:#c2c2c2;transform:scaleX(1.0217);transform-origin:0 0;-webkit-text-stroke:0.15px #c2c2c2;">Yatarak</div>
<div class="t" style="left:1535.00px;top:523.40px;font-size:21px;line-height:21px;color:#a9c5ea;">0</div>
<div class="t" style="left:1549.82px;top:528.90px;font-size:14px;line-height:14px;color:#c2c2c2;transform:scaleX(1.1774);transform-origin:0 0;-webkit-text-stroke:0.15px #c2c2c2;">Günübirlik</div>
<div class="t" style="left:1180.95px;top:587.80px;font-size:38px;line-height:38px;color:#f07a3c;transform:scaleX(1.0526);transform-origin:0 0;-webkit-text-stroke:0.25px #fff;">0</div>
<div class="t" style="left:1150.00px;top:634.70px;font-size:16.5px;line-height:16.5px;color:#c2c2c2;transform:scaleX(0.9109);transform-origin:0 0;-webkit-text-stroke:0.15px #c2c2c2;">Toplam Hasta</div>
<div class="t" style="left:1523.00px;top:577.00px;font-size:21px;line-height:21px;color:#a9c5ea;">13</div>
<div class="t" style="left:1551.99px;top:583.00px;font-size:14.5px;line-height:14.5px;color:#c2c2c2;transform:scaleX(1.0141);transform-origin:0 0;-webkit-text-stroke:0.15px #c2c2c2;">Özel Hasta</div>
<div class="t" style="left:1524.00px;top:607.50px;font-size:21px;line-height:21px;color:#a9c5ea;transform:scaleX(0.9565);transform-origin:0 0;">41</div>
<div class="t" style="left:1552.04px;top:613.00px;font-size:14.5px;line-height:14.5px;color:#c2c2c2;transform:scaleX(0.9634);transform-origin:0 0;-webkit-text-stroke:0.15px #c2c2c2;">SGK Hastası</div>
<div class="t" style="left:1550.95px;top:642.40px;font-size:14.5px;line-height:14.5px;color:#c2c2c2;transform:scaleX(1.0506);transform-origin:0 0;-webkit-text-stroke:0.15px #c2c2c2;">Özel Sigorta</div>
<div class="t" style="left:1534.45px;top:663.00px;font-size:21px;line-height:21px;color:#a9c5ea;transform:scaleX(1.0500);transform-origin:0 0;">2</div>
<div class="t" style="left:1550.94px;top:669.00px;font-size:14.5px;line-height:14.5px;color:#c2c2c2;transform:scaleX(1.0588);transform-origin:0 0;-webkit-text-stroke:0.15px #c2c2c2;">Diğer</div>
<div class="t" style="left:1155.60px;top:706.00px;font-size:18.3px;line-height:18.3px;color:#bcbcbc;transform:scaleX(0.9309);transform-origin:0 0;-webkit-text-stroke:0.15px #bcbcbc;">Tüm Hastalar</div>
<div class="t" style="left:1463.00px;top:1000.30px;font-size:25.4px;line-height:25.4px;color:#b3b3b3;transform:scaleX(1.0544);transform-origin:0 0;">Windows'u Etkinleştir</div>
<div class="t" style="left:1463.00px;top:1034.00px;font-size:19px;line-height:19px;color:#b8b8b8;transform:scaleX(1.0201);transform-origin:0 0;">Windows'u etkinleştirmek için Ayarlar'a gidin.</div>
</body></html>
